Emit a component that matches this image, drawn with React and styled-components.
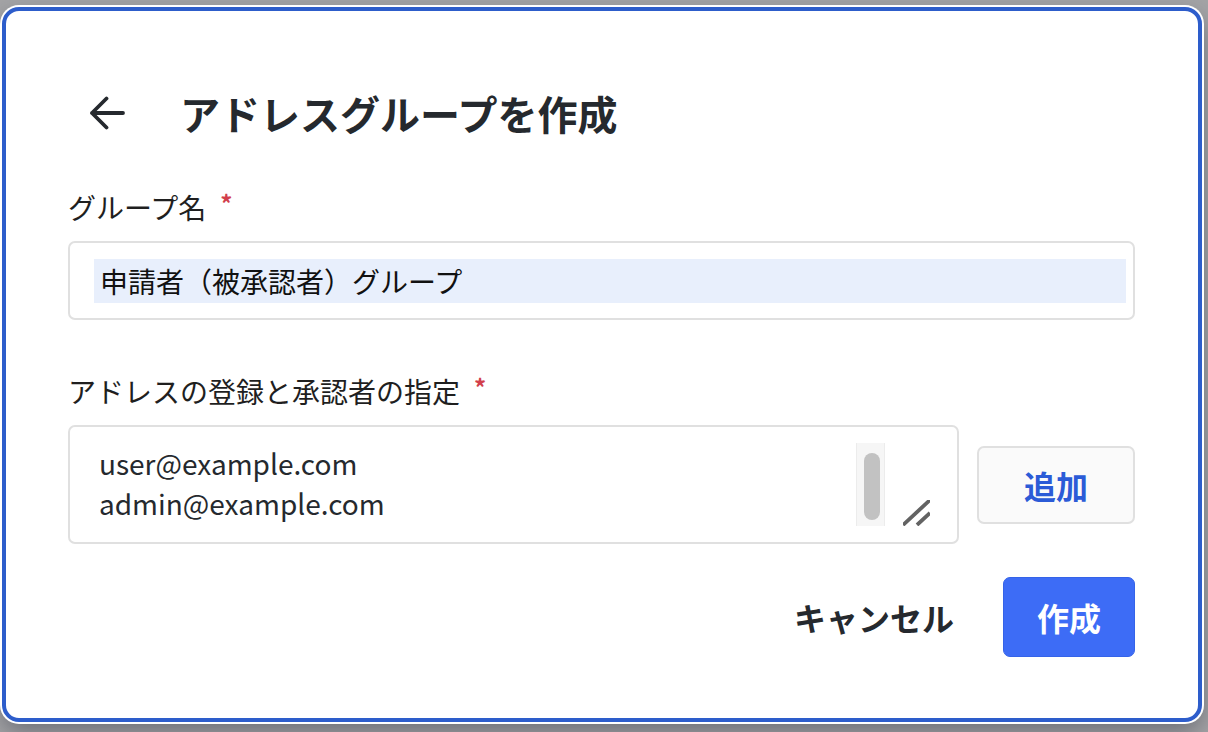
import React, { useState } from "react";
import styled, { createGlobalStyle } from "styled-components";

const GlobalStyle = createGlobalStyle`
  html, body {
    margin: 0;
    padding: 0;
    height: 100%;
    background: #a4a4a6;
    overflow: hidden;
  }
  body {
    font-family: "Noto Sans CJK JP", "Noto Sans", sans-serif;
  }
  * {
    box-sizing: border-box;
  }
`;

const Dialog = styled.div`
  margin: 7px 0 0 2px;
  width: 1200px;
  height: 715px;
  background: #fff;
  border: 4px solid #2d5dcb;
  border-radius: 17px;
  box-shadow: 0 0 0 2px #fff, 0 10px 24px rgba(40, 44, 60, 0.45);
  padding: 62px 63px 0 62px;
  display: flex;
  flex-direction: column;
`;

const Header = styled.div`
  display: flex;
  align-items: center;
  height: 80px;
`;

const BackButton = styled.button`
  border: 0;
  background: transparent;
  padding: 0;
  margin: 0 55px 0 21px;
  display: flex;
  align-items: center;
  cursor: pointer;
`;

const Title = styled.h2`
  margin: 0;
  font-size: 40px;
  font-weight: 700;
  color: #25292e;
  line-height: 1;
`;

const Label = styled.label`
  display: flex;
  align-items: center;
  height: 40px;
  margin-top: ${(p) => p.$top}px;
  font-size: 28px;
  color: #1f1f1f;
  line-height: 40px;
`;

const Required = styled.span`
  color: #d23f4c;
  font-size: 24px;
  font-weight: 700;
  margin-left: 14px;
  margin-top: -8px;
`;

const InputWrap = styled.div`
  margin-top: 14px;
  height: 79px;
  border: 2px solid #e0e0e0;
  border-radius: 7px;
  padding: 16px 7px 15px 24px;
  display: flex;
`;

const Input = styled.input`
  flex: 1;
  border: 0;
  outline: none;
  background: #e8effc;
  height: 44px;
  padding: 0 6px;
  font-family: inherit;
  font-size: 28px;
  color: #111;
`;

const AddressRow = styled.div`
  margin-top: 14px;
  display: flex;
  align-items: center;
  gap: 18px;
`;

const TextareaBox = styled.div`
  width: 891px;
  height: 119px;
  border: 2px solid #e0e0e0;
  border-radius: 7px;
  padding: 16px 27px 16px 29px;
  display: flex;
`;

const Textarea = styled.textarea`
  flex: 1;
  border: 0;
  outline: none;
  resize: none;
  overflow: hidden;
  padding: 0;
  margin: 0;
  font-family: inherit;
  font-size: 28px;
  line-height: 40px;
  color: #25292e;
`;

const Track = styled.div`
  width: 29px;
  background: #f6f6f6;
  border-left: 1px solid #ececec;
  border-right: 1px solid #ececec;
  padding: 10px 0 0 7px;
`;

const Thumb = styled.div`
  width: 16px;
  height: 67px;
  border-radius: 8px;
  background: #c2c2c2;
`;

const Grip = styled.div`
  width: 27px;
  margin-left: 18px;
  display: flex;
  align-items: flex-end;
`;

const Button = styled.button`
  height: ${(p) => p.$h}px;
  font-family: inherit;
  font-size: 32px;
  font-weight: 700;
  border-radius: 7px;
  cursor: pointer;
  padding: 0;
`;

const AddButton = styled(Button)`
  width: 158px;
  background: #fafafa;
  border: 2px solid #e0e0e0;
  color: #2b5bd7;
`;

const Actions = styled.div`
  margin-top: 33px;
  display: flex;
  justify-content: flex-end;
  align-items: center;
  gap: 33px;
`;

const CancelButton = styled(Button)`
  background: transparent;
  border: 0;
  padding: 0 16px;
  color: #25292e;
`;

const SubmitButton = styled(Button)`
  width: 132px;
  background: #3d6cf6;
  border: 1px solid #3563e8;
  color: #fff;
`;

const ArrowLeft = () => (
  <svg width="36" height="34" viewBox="0 0 36 34" fill="none">
    <path
      d="M34 17H3M17.5 2.5L3 17l14.5 14.5"
      stroke="#25292e"
      strokeWidth="3.8"
      strokeLinecap="round"
      strokeLinejoin="round"
    />
  </svg>
);

// drag handle in the textarea corner
const ResizeGrip = () => (
  <svg width="27" height="26" viewBox="0 0 27 26">
    <path d="M0 25L27 0M14 25L27 13" stroke="#636363" strokeWidth="3.8" />
  </svg>
);

const App = () => {
  const [name, setName] = useState("申請者（被承認者）グループ");
  const [addresses, setAddresses] = useState(
    "user@example.com\nadmin@example.com"
  );

  return (
    <>
      <GlobalStyle />
      <Dialog>
        <Header>
          <BackButton aria-label="戻る">
            <ArrowLeft />
          </BackButton>
          <Title>アドレスグループを作成</Title>
        </Header>

        <Label $top={34}>
          グループ名<Required>*</Required>
        </Label>
        <InputWrap>
          <Input value={name} onChange={(e) => setName(e.target.value)} />
        </InputWrap>

        <Label $top={51}>
          アドレスの登録と承認者の指定<Required>*</Required>
        </Label>
        <AddressRow>
          <TextareaBox>
            <Textarea
              value={addresses}
              onChange={(e) => setAddresses(e.target.value)}
            />
            <Track>
              <Thumb />
            </Track>
            <Grip>
              <ResizeGrip />
            </Grip>
          </TextareaBox>
          <AddButton $h={78}>追加</AddButton>
        </AddressRow>

        <Actions>
          <CancelButton $h={80}>キャンセル</CancelButton>
          <SubmitButton $h={80}>作成</SubmitButton>
        </Actions>
      </Dialog>
    </>
  );
};

export default App;
